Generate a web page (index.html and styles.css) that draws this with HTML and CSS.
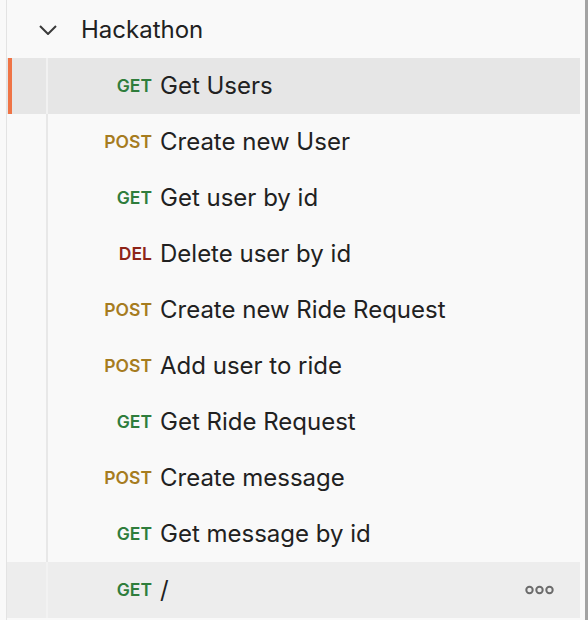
FILE: index.html
```html
<!DOCTYPE html>
<html>
<head>
<meta charset="utf-8">
<link rel="stylesheet" href="styles.css">
</head>
<body>
<div class="panel">
  <div class="tree">
    <div class="folder">
      <svg class="chev" width="18" height="10" viewBox="0 0 18 10"><path d="M1 1 L9 9 L17 1" fill="none" stroke="#3a3a3a" stroke-width="2"/></svg>
      <span class="folder-name">Hackathon</span>
    </div>
    <div class="row selected"><span class="indicator"></span><span class="guide"></span><span class="method get">GET</span><span class="name">Get Users</span></div>
    <div class="row"><span class="indicator"></span><span class="guide"></span><span class="method post">POST</span><span class="name">Create new User</span></div>
    <div class="row"><span class="indicator"></span><span class="guide"></span><span class="method get">GET</span><span class="name">Get user by id</span></div>
    <div class="row"><span class="indicator"></span><span class="guide"></span><span class="method del">DEL</span><span class="name">Delete user by id</span></div>
    <div class="row"><span class="indicator"></span><span class="guide"></span><span class="method post">POST</span><span class="name">Create new Ride Request</span></div>
    <div class="row"><span class="indicator"></span><span class="guide"></span><span class="method post">POST</span><span class="name">Add user to ride</span></div>
    <div class="row"><span class="indicator"></span><span class="guide"></span><span class="method get">GET</span><span class="name">Get Ride Request</span></div>
    <div class="row"><span class="indicator"></span><span class="guide"></span><span class="method post">POST</span><span class="name">Create message</span></div>
    <div class="row"><span class="indicator"></span><span class="guide"></span><span class="method get">GET</span><span class="name">Get message by id</span></div>
    <div class="row hover"><span class="indicator"></span><span class="guide"></span><span class="method get">GET</span><span class="name">/</span>
      <svg class="more" width="30" height="10" viewBox="0 0 30 10"><circle cx="4.5" cy="5" r="3.2" fill="none" stroke="#6b6b6b" stroke-width="2"/><circle cx="14.5" cy="5" r="3.2" fill="none" stroke="#6b6b6b" stroke-width="2"/><circle cx="24.5" cy="5" r="3.2" fill="none" stroke="#6b6b6b" stroke-width="2"/></svg>
    </div>
  </div>
  <div class="scrollbar"></div>
</div>
</body>
</html>
```

FILE: styles.css
```css
html, body {
  margin: 0;
  padding: 0;
  background: #f9f9f9;
}
body {
  font-family: Inter, "Noto Sans", sans-serif;
  color: #212121;
  width: 588px;
  height: 620px;
  overflow: hidden;
}
.panel {
  display: flex;
  height: 620px;
}
.tree {
  margin-left: 6px;
  border-left: 1px solid #e3e3e3;
  width: 573px;
  padding-top: 2px;
  flex: none;
}
.scrollbar {
  margin-left: 5px;
  width: 3px;
  background: #a3a3a3;
  flex: none;
}
.folder {
  height: 56px;
  display: flex;
  align-items: center;
}
.chev {
  margin-left: 32px;
  flex: none;
}
.folder-name {
  margin-left: 24px;
  font-size: 24px;
  position: relative;
  top: -1px;
}
.row {
  height: 56px;
  display: flex;
  align-items: center;
}
.indicator {
  width: 4px;
  align-self: stretch;
  margin-left: 1px;
  flex: none;
}
.guide {
  width: 2px;
  align-self: stretch;
  margin-left: 34px;
  background: #e8e8e8;
  flex: none;
}
.method {
  width: 104px;
  text-align: right;
  font-size: 17.5px;
  font-weight: 600;
  flex: none;
  margin-bottom: 2px;
}
.get { color: #2f7d3c; }
.post { color: #a67c1f; }
.del { color: #8e2418; }
.name {
  margin-left: 8px;
  font-size: 24px;
  flex: 1;
  margin-bottom: 2px;
}
.selected { background: #e6e6e6; }
.selected .indicator { background: #ef7446; }
.selected .guide { background: #f1f1f1; }
.hover { background: #ededed; }
.hover .guide { background: #f2f2f2; }
.more {
  margin-right: 25px;
  flex: none;
}
```
